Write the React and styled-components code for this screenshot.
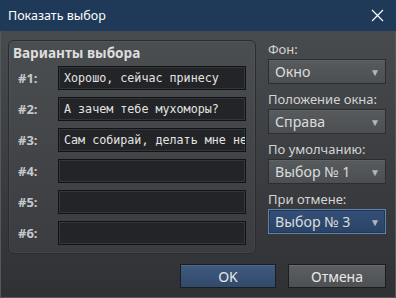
import styled, { createGlobalStyle } from "styled-components";

const GlobalStyle = createGlobalStyle`
  html, body {
    margin: 0;
    padding: 0;
    background: #2e3033;
  }
  * {
    box-sizing: border-box;
  }
`;

const Window = styled.div`
  width: 396px;
  height: 298px;
  display: flex;
  flex-direction: column;
  font-family: "Noto Sans", "Open Sans", sans-serif;
  overflow: hidden;
`;

const TitleBar = styled.div`
  height: 31px;
  flex-shrink: 0;
  background: #1e3a58;
  display: flex;
  align-items: center;
  justify-content: space-between;
  padding: 0 12px 0 8px;
  color: #ffffff;
  font-size: 12.5px;
`;

const Body = styled.div`
  flex: 1;
  display: flex;
  flex-direction: column;
  padding: 9px 9px 0 7px;
  border: 1px solid #55585b;
  border-top: none;
  background: linear-gradient(#484b4e, #2f3134);
`;

const Main = styled.div`
  display: flex;
  gap: 12px;
  align-items: flex-start;
`;

const Group = styled.fieldset`
  margin: 0;
  width: 248px;
  padding: 2px 9px 8px 9px;
  border: 1px solid #2a2c2f;
  border-radius: 6px;
  background: linear-gradient(#4b4e51, #3a3c3f);
  box-shadow: inset 0 0 0 1px rgba(255, 255, 255, 0.04);
`;

const Heading = styled.div`
  font-weight: 700;
  font-size: 13.6px;
  line-height: 20px;
  color: #dedede;
  margin: 0 0 3px -5px;
`;

const Rows = styled.div`
  display: flex;
  flex-direction: column;
  gap: 7px;
`;

const Row = styled.div`
  display: flex;
  align-items: center;
`;

const RowLabel = styled.span`
  width: 40px;
  font-size: 13px;
  font-weight: 700;
  color: #c6c9cc;
`;

const TextBox = styled.div`
  width: 188px;
  height: 24px;
  background: #222427;
  border: 1px solid #121314;
  box-shadow: inset 0 0 0 1px #34373a;
  padding: 0 5px;
  font-family: "DejaVu Sans Mono", "Liberation Mono", monospace;
  font-size: 11.7px;
  line-height: 22px;
  color: #e4e4e4;
  white-space: nowrap;
  overflow: hidden;
`;

const Side = styled.div`
  width: 118px;
  display: flex;
  flex-direction: column;
  gap: 6px;
`;

const Field = styled.div`
  display: flex;
  flex-direction: column;
  gap: 1px;
`;

const FieldLabel = styled.div`
  font-size: 13px;
  line-height: 18px;
  color: #d4d4d4;
`;

const Select = styled.div`
  height: 25px;
  display: flex;
  align-items: center;
  justify-content: space-between;
  padding: 0 5px 0 6px;
  border: 1px solid ${(p) => (p.$active ? "#5f82ab" : "#2b2d30")};
  background: ${(p) =>
    p.$active
      ? "linear-gradient(#34507a, #2a4364)"
      : "linear-gradient(#575b5e, #4b4f52)"};
  color: #dcdcdc;
  font-size: 14.2px;
  box-shadow: ${(p) =>
    p.$active ? "inset 0 0 0 1px #223956" : "inset 0 1px 0 rgba(255,255,255,0.06)"};
`;

const Arrow = styled.span`
  font-size: 10px;
  color: #b3b6b9;
`;

const Buttons = styled.div`
  margin-top: 10px;
  display: flex;
  justify-content: flex-end;
  gap: 12px;
`;

const Button = styled.button`
  width: ${(p) => (p.$primary ? "96px" : "98px")};
  height: 24px;
  border: 1px solid #1b1d1f;
  background: ${(p) =>
    p.$primary
      ? "linear-gradient(#3f5a80, #324a6b)"
      : "linear-gradient(#5b5f62, #4d5154)"};
  color: #e8e8e8;
  font-family: "Noto Sans", "Open Sans", sans-serif;
  font-size: 14px;
  padding: 0;
  box-shadow: inset 0 1px 0 rgba(255, 255, 255, 0.08);
`;

const choices = [
  "Хорошо, сейчас принесу",
  "А зачем тебе мухоморы?",
  "Сам собирай, делать мне нечего",
  "",
  "",
  "",
];

const fields = [
  { label: "Фон:", value: "Окно" },
  { label: "Положение окна:", value: "Справа" },
  { label: "По умолчанию:", value: "Выбор № 1" },
  { label: "При отмене:", value: "Выбор № 3", active: true },
];

export default function App() {
  return (
    <>
      <GlobalStyle />
      <Window>
        <TitleBar>
          <span>Показать выбор</span>
          <svg width="13" height="13" viewBox="0 0 13 13">
            <path d="M1 1 L12 12 M12 1 L1 12" stroke="#fff" strokeWidth="1.2" />
          </svg>
        </TitleBar>
        <Body>
          <Main>
            <Group>
              <Heading>Варианты выбора</Heading>
              <Rows>
                {choices.map((text, i) => (
                  <Row key={i}>
                    <RowLabel>#{i + 1}:</RowLabel>
                    <TextBox>{text}</TextBox>
                  </Row>
                ))}
              </Rows>
            </Group>
            <Side>
              {fields.map((f) => (
                <Field key={f.label}>
                  <FieldLabel>{f.label}</FieldLabel>
                  <Select $active={f.active}>
                    <span>{f.value}</span>
                    <Arrow>▼</Arrow>
                  </Select>
                </Field>
              ))}
            </Side>
          </Main>
          <Buttons>
            <Button $primary>OK</Button>
            <Button>Отмена</Button>
          </Buttons>
        </Body>
      </Window>
    </>
  );
}
